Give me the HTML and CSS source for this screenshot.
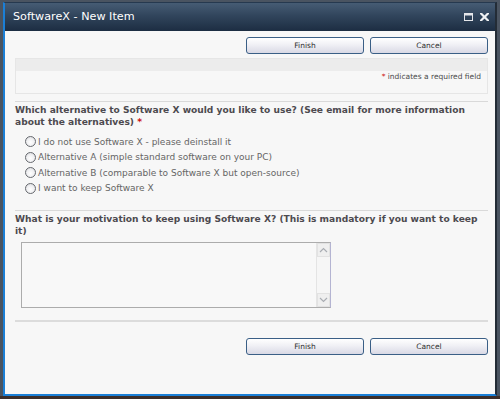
FILE: index.html
```html
<!DOCTYPE html>
<html lang="en">
<head>
  <meta charset="UTF-8" />
  <title>SoftwareX - New Item</title>
  <link rel="stylesheet" href="styles.css">
</head>
<body>

  <div class="dialog">
    <div class="titlebar">
      <span class="title">SoftwareX - New Item</span>
      <div class="window-icons">
        <!-- maximize -->
        <svg width="9" height="8" viewBox="0 0 9 8">
          <rect x="0.5" y="0.5" width="8" height="7" fill="none" stroke="#e4e6ea" stroke-width="1"/>
          <rect x="0" y="0" width="9" height="2.5" fill="#e4e6ea"/>
        </svg>
        <!-- close -->
        <svg width="9" height="8" viewBox="0 0 9 8">
          <path d="M1 0.5 L8 7.5 M8 0.5 L1 7.5" stroke="#eef0f2" stroke-width="2.2" stroke-linecap="square"/>
        </svg>
      </div>
    </div>

    <div class="content">
      <div class="toolbar">
        <button class="btn">Finish</button>
        <button class="btn">Cancel</button>
      </div>

      <div class="required-box">
        <div class="required-head"></div>
        <div class="required-note"><span class="star">*</span> indicates a required field</div>
      </div>

      <div class="field">
        <div class="label">
          <span class="label-line">Which alternative to Software X would you like to use? (See email for more information</span>
          <span class="label-line">about the alternatives) <span class="star">*</span></span>
        </div>
        <div class="choices">
          <label class="choice"><input type="radio" name="alt"><span>I do not use Software X - please deinstall it</span></label>
          <label class="choice"><input type="radio" name="alt"><span>Alternative A (simple standard software on your PC)</span></label>
          <label class="choice"><input type="radio" name="alt"><span>Alternative B (comparable to Software X but open-source)</span></label>
          <label class="choice"><input type="radio" name="alt"><span>I want to keep Software X</span></label>
        </div>
      </div>

      <div class="field field-last">
        <div class="label">What is your motivation to keep using Software X? (This is mandatory if you want to keep it)</div>
        <div class="textbox">
          <textarea class="textbox-area"></textarea>
          <div class="scrollbar">
            <div class="scroll-btn">
              <svg width="9" height="6" viewBox="0 0 9 6"><path d="M1 5 L4.5 1.5 L8 5" fill="none" stroke="#a9adb3" stroke-width="1.2"/></svg>
            </div>
            <div class="scroll-track"></div>
            <div class="scroll-btn">
              <svg width="9" height="6" viewBox="0 0 9 6"><path d="M1 1 L4.5 4.5 L8 1" fill="none" stroke="#a9adb3" stroke-width="1.2"/></svg>
            </div>
          </div>
        </div>
      </div>

      <div class="divider"></div>

      <div class="toolbar toolbar-bottom">
        <button class="btn">Finish</button>
        <button class="btn">Cancel</button>
      </div>
    </div>
  </div>

  <div class="statusbar"></div>

</body>
</html>
```

FILE: styles.css
```css
* {
  box-sizing: border-box;
  margin: 0;
  padding: 0;
}

body {
  width: 500px;
  height: 399px;
  overflow: hidden;
  background: #4a5461;
  font-family: "DejaVu Sans", Verdana, sans-serif;
}

.dialog {
  margin: 2px 3px 0 3px;
  border-top: 1px solid #26394f;
  border-left: 2px solid #1b7fd6;
  border-right: 2px solid #232c36;
  border-bottom: 2px solid #1b7fd6;
}

.titlebar {
  height: 28px;
  display: flex;
  align-items: center;
  justify-content: space-between;
  padding: 0 6px 0 8px;
  background: linear-gradient(to bottom, #465c74 0%, #31455c 45%, #1c2d42 100%);
}

.title {
  color: #ffffff;
  font-size: 11.2px;
  line-height: 28px;
}

.window-icons {
  display: flex;
  gap: 7px;
  margin-top: -1px;
}

.window-icons svg {
  display: block;
}

.content {
  height: 363px;
  overflow: hidden;
  background: #f7f7f7;
  padding: 6px 7px 0 10px;
}

.toolbar {
  display: flex;
  justify-content: flex-end;
  gap: 6px;
}

.toolbar-bottom {
  margin-top: 16px;
}

.btn {
  width: 118px;
  height: 17px;
  border: 1px solid #3a5f86;
  border-radius: 3px;
  background: linear-gradient(to bottom, #ffffff 0%, #f0f0f5 45%, #d9d9e5 100%);
  font-family: "DejaVu Sans", Verdana, sans-serif;
  font-size: 7.5px;
  color: #2e2e2e;
  line-height: 15px;
}

.required-box {
  margin-top: 4px;
  border: 1px solid #e6e6e6;
}

.required-head {
  height: 12px;
  background: #ececec;
}

.required-note {
  height: 22px;
  padding: 1px 6px 0 0;
  text-align: right;
  font-size: 7.5px;
  line-height: 10px;
  color: #4a4a4a;
}

.star {
  color: #cc1111;
}

.field {
  margin-top: 7px;
  border-top: 1px solid #d9d9d9;
  padding-top: 2px;
}

.field-last {
  margin-top: 14px;
}

.label {
  font-size: 9.1px;
  font-weight: bold;
  line-height: 12px;
  color: #4d4a4f;
}

.label-line {
  display: block;
}

.choices {
  margin-top: 6px;
  display: flex;
  flex-direction: column;
}

.choice {
  display: flex;
  align-items: center;
  height: 15.5px;
  font-size: 9px;
  color: #656565;
}

.choice input {
  appearance: none;
  -webkit-appearance: none;
  width: 11px;
  height: 11px;
  margin: 0 2px 0 10px;
  border: 1px solid #66696e;
  border-radius: 50%;
  background: radial-gradient(circle at 50% 60%, #ffffff 0%, #f0f0f2 50%, #d2d4d8 100%);
}

.textbox {
  display: flex;
  width: 310px;
  height: 66px;
  margin: 5px 0 0 6px;
  border: 1px solid #acacac;
  border-right-color: #b4b4d2;
  background: #f8f8f8;
}

.textbox-area {
  flex: 1;
  border: none;
  outline: none;
  resize: none;
  background: transparent;
}

.scrollbar {
  width: 14px;
  display: flex;
  flex-direction: column;
  border-left: 1px solid #e4e4e4;
  background: #f6f6f6;
}

.scroll-btn {
  height: 14px;
  display: flex;
  align-items: center;
  justify-content: center;
  background: #efefef;
  border: 1px solid #e2e2e2;
}

.scroll-track {
  flex: 1;
}

.divider {
  margin-top: 12px;
  height: 2px;
  background: #dcdcdc;
}

.statusbar {
  height: 3px;
  background: #3d2f2b;
}
```
